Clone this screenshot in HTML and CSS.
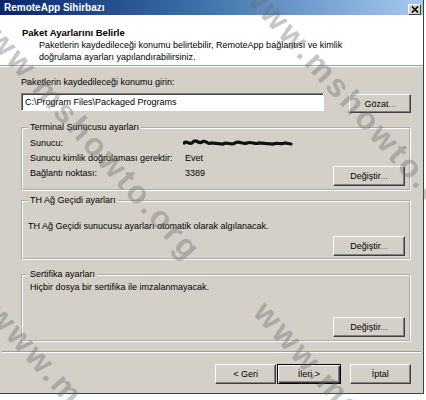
FILE: index.html
```html
<!DOCTYPE html>
<html lang="tr">
<head>
  <meta charset="UTF-8">
  <title>RemoteApp Sihirbazı</title>
  <link rel="stylesheet" href="styles.css">
</head>
<body>

<div class="dialog">
  <div class="titlebar">
    <span>RemoteApp Sihirbazı</span>
    <span class="close">
      <svg width="8" height="7" viewBox="0 0 8 7"><path d="M1 0.5 L7 6.5 M7 0.5 L1 6.5" stroke="#000" stroke-width="1.6"/></svg>
    </span>
  </div>

  <div class="header">
    <h1>Paket Ayarlarını Belirle</h1>
    <p>Paketlerin kaydedileceği konumu belirtebilir, RemoteApp bağlantısı ve kimlik<br>doğrulama ayarları yapılandırabilirsiniz.</p>
  </div>

  <div class="content">
    <div class="label">Paketlerin kaydedileceği konumu girin:</div>
    <div class="path-row">
      <div class="input">C:\Program Files\Packaged Programs</div>
      <button class="btn btn-browse">Gözat<span class="dots">...</span></button>
    </div>

    <fieldset class="group group-ts">
      <legend>Terminal Sunucusu ayarları</legend>
      <div class="rows">
        <span>Sunucu:</span>
        <span class="redacted">
          <svg width="110" height="9" viewBox="0 0 110 9"><path d="M1 4 C4 1 7 7 10 3 S16 6 19 3 S25 6 28 4 L40 5 C44 2 48 7 52 4 S60 6 64 4 S72 6 76 4 L90 5 C94 3 98 6 102 4 L108 5" stroke="#111" stroke-width="3.2" fill="none" stroke-linecap="round"/></svg>
        </span>
        <span></span>
        <span>Sunucu kimlik doğrulaması gerektir:</span>
        <span>Evet</span>
        <span></span>
        <span>Bağlantı noktası:</span>
        <span>3389</span>
        <button class="btn btn-change">Değiştir<span class="dots">...</span></button>
      </div>
    </fieldset>

    <fieldset class="group group-gw">
      <legend>TH Ağ Geçidi ayarları</legend>
      <p>TH Ağ Geçidi sunucusu ayarları otomatik olarak algılanacak.</p>
      <div class="actions"><button class="btn btn-change">Değiştir<span class="dots">...</span></button></div>
    </fieldset>

    <fieldset class="group group-cert">
      <legend>Sertifika ayarları</legend>
      <p>Hiçbir dosya bir sertifika ile imzalanmayacak.</p>
      <div class="actions"><button class="btn btn-change">Değiştir<span class="dots">...</span></button></div>
    </fieldset>
  </div>

  <div class="footer">
    <button class="btn btn-nav">&lt; Geri</button>
    <button class="btn btn-nav btn-default">İleri &gt;</button>
    <button class="btn btn-nav btn-cancel">İptal</button>
  </div>
</div>

<div class="watermark">
  <span class="wm wm-1">www.mshowto.org</span>
  <span class="wm wm-2">www.mshowto.org</span>
  <span class="wm wm-3">www.mshowto.org</span>
  <span class="wm wm-4">www.mshowto.org</span>
</div>

</body>
</html>
```

FILE: styles.css
```css
* { margin: 0; padding: 0; box-sizing: border-box; }

body {
  font-family: 'Liberation Sans', Arial, sans-serif;
  font-size: 9px;
  color: #000;
  background: #fff;
  width: 426px;
  height: 400px;
  position: relative;
  overflow: hidden;
}

/* Dialog frame */
.dialog {
  width: 424px;
  height: 394px;
  background: #d4d0c8;
  border-right: 1px solid #404040;
  border-bottom: 1px solid #404040;
  display: flex;
  flex-direction: column;
}

.titlebar {
  height: 15px;
  background: linear-gradient(90deg, #0a246a 0%, #3a6ea5 45%, #a6caf0 100%);
  color: #fff;
  font-weight: 700;
  font-size: 10px;
  display: flex;
  align-items: center;
  justify-content: space-between;
  padding: 0 2px 0 4px;
}

.close {
  width: 13px;
  height: 11px;
  margin-top: 3px;
  background: #d4d0c8;
  border: 1px solid;
  border-color: #fff #404040 #404040 #fff;
  display: flex;
  align-items: center;
  justify-content: center;
}

/* Header */
.header {
  height: 51px;
  background: #fff;
  padding: 12px 0 0 22px;
  border-bottom: 1px solid #a09c94;
  box-shadow: 0 1px 0 #fff;
}

.header h1 {
  font-size: 9.5px;
  font-weight: 700;
  line-height: 12px;
}

.header p {
  padding-left: 17px;
  line-height: 12px;
}

/* Content */
.content {
  padding: 10px 12px 0 21px;
  flex: 1;
}

.label { line-height: 12px; }

.path-row {
  display: flex;
  align-items: flex-start;
  margin-top: 5px;
}

.input {
  width: 305px;
  height: 18px;
  background: #fff;
  border: 1px solid;
  border-color: #808080 #fff #fff #808080;
  box-shadow: inset 1px 1px 0 #404040;
  padding: 0 3px;
  line-height: 16px;
}

.btn {
  font-family: inherit;
  font-size: 9px;
  color: #000;
  background: #d4d0c8;
  border: 1px solid;
  border-color: #fff #404040 #404040 #fff;
  box-shadow: inset -1px -1px 0 #808080;
  height: 20px;
  text-align: center;
}

.btn .dots { color: #6a6a6a; }

.btn-browse {
  width: 62px;
  margin: 1px 0 0 25px;
  height: 19px;
}

/* Group boxes */
.group {
  border: 2px groove #fff;
  padding: 0 4px 3px 5px;
}

.group legend {
  padding: 0 2px;
  line-height: 11px;
}

.group-ts { margin-top: 9px; }
.group-gw { margin-top: 4px; padding-bottom: 2px; }
.group-cert { margin-top: 9px; }

.rows {
  display: grid;
  grid-template-columns: 155px 1fr 72px;
  grid-auto-rows: 15px;
  align-items: start;
  padding: 3px 0 0 2px;
  height: 53px;
}

.rows span { line-height: 15px; }
.rows .btn-change { height: 20px; }

.redacted {
  display: flex;
  align-items: center;
  height: 15px;
  margin-left: -2px;
}

.btn-change { width: 72px; }

.group-gw p { margin-top: 14px; line-height: 12px; }
.group-gw .actions { margin-top: 4px; }

.group-cert p { margin-top: 1px; line-height: 12px; padding-left: 2px; }
.group-cert .actions { margin-top: 24px; }

.actions {
  display: flex;
  justify-content: flex-end;
}

/* Footer buttons */
.footer {
  height: 42px;
  border-top: 1px solid #a09c94;
  box-shadow: inset 0 1px 0 #fff;
  margin: 0 2px 0 2px;
  display: flex;
  align-items: flex-start;
  padding: 12px 10px 0 213px;
}

.btn-nav { width: 62px; }
.btn-default {
  width: 64px;
  margin-left: 1px;
  border: 1px solid #000;
  box-shadow: inset 1px 1px 0 #fff, inset -1px -1px 0 #404040, inset -2px -2px 0 #808080;
}
.btn-cancel { margin-left: 9px; }

/* Watermark overlay */
.watermark {
  position: absolute;
  inset: 0;
  pointer-events: none;
  overflow: hidden;
}

.wm {
  position: absolute;
  font-family: 'Liberation Sans', Arial, sans-serif;
  font-weight: 700;
  font-size: 32px;
  letter-spacing: 3px;
  color: rgba(105, 105, 105, 0.4);
  white-space: nowrap;
  transform-origin: 0 50%;
  transform: rotate(48deg);
  line-height: 32px;
}

.wm-1 { left: -24px; top: -4px; }
.wm-2 { left: 248px; top: -30px; }
.wm-3 { left: -6px; top: 292px; }
.wm-4 { left: 260px; top: 290px; }
```
